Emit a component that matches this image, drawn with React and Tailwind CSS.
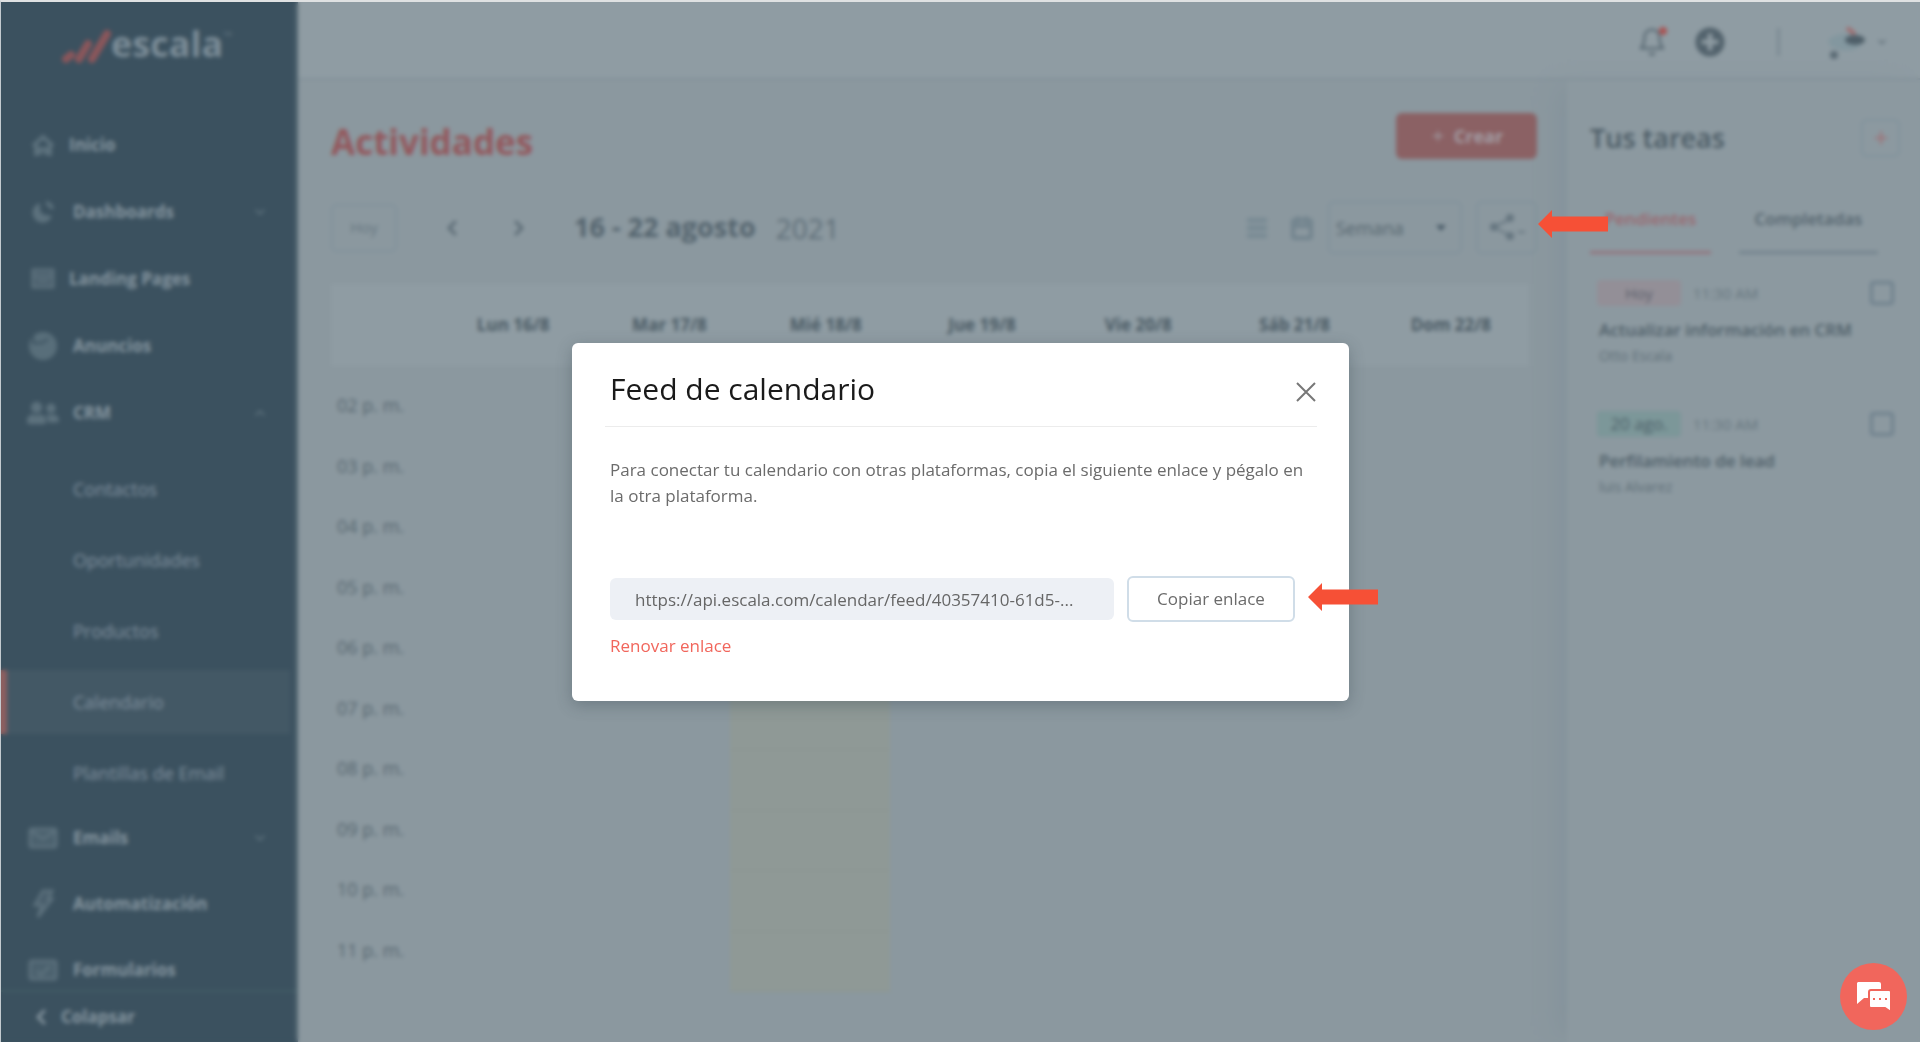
import React, { useState } from 'react';
import { FiBell, FiCalendar, FiChevronDown, FiChevronLeft, FiChevronRight, FiChevronUp, FiPlus, FiShare2 } from 'react-icons/fi';
import { FaPlusCircle, FaUserFriends } from 'react-icons/fa';

const HomeIcon = () => (
    <svg viewBox="0 0 24 24" className="w-6 h-6" fill="none" stroke="currentColor" strokeWidth="4">
        <path d="M2 13L12 4l10 9M5 11v12M19 11v12M9 22v-6h6v6" />
    </svg>
);

const PieIcon = () => (
    <svg viewBox="0 0 24 24" className="w-6 h-6" fill="currentColor">
        <path d="M9 3a10 10 0 1 0 12 13l-6-1a6 6 0 0 1-6-6z" />
        <path d="M15 1a9 9 0 0 1 8 8h-4a6 6 0 0 0-4-4z" />
    </svg>
);

const BoxIcon = ({ children }) => (
    <svg viewBox="0 0 30 22" className="w-[30px] h-[22px]" fill="none" stroke="currentColor" strokeWidth="3">
        <rect x="2" y="2" width="26" height="18" rx="2" fill="currentColor" fillOpacity="0.5" />
        {children}
    </svg>
);

const LandingIcon = () => (
    <svg viewBox="0 0 24 22" className="w-6 h-[22px]" fill="none" stroke="currentColor" strokeWidth="3">
        <path d="M2 2h20v17H2zM2 8h20M6 13h12" fill="currentColor" fillOpacity="0.4" />
    </svg>
);

const AdsIcon = () => (
    <svg viewBox="0 0 30 30" className="w-[30px] h-[30px]" fill="none" stroke="currentColor">
        <circle cx="15" cy="15" r="14" fill="currentColor" stroke="none" fillOpacity="0.9" />
        <path d="M5 3v9h9l6-4" stroke="#3b515f" strokeWidth="2" />
    </svg>
);

const BoltIcon = () => (
    <svg viewBox="0 0 24 30" className="w-6 h-[30px]" fill="none" stroke="currentColor" strokeWidth="3">
        <path d="M12 2h9l-4 8h4L7 28l4-12H4z" fill="currentColor" fillOpacity="0.4" />
    </svg>
);

const mainItems = [
    { label: 'Inicio', icon: <HomeIcon />, tight: true },
    { label: 'Dashboards', icon: <PieIcon />, arrow: 'down' },
    { label: 'Landing Pages', icon: <LandingIcon />, tight: true },
    { label: 'Anuncios', icon: <AdsIcon /> },
    { label: 'CRM', icon: <FaUserFriends className="w-8 h-7" />, arrow: 'up' },
];

const crmItems = ['Contactos', 'Oportunidades', 'Productos', 'Calendario', 'Plantillas de Email'];

const extraItems = [
    { label: 'Emails', icon: <BoxIcon><path d="M3 4l12 8 12-8" /></BoxIcon>, arrow: 'down' },
    { label: 'Automatización', icon: <BoltIcon /> },
    { label: 'Formularios', icon: <BoxIcon><path d="M9 12l4 4 9-9" /></BoxIcon> },
];

const days = ['Lun 16/8', 'Mar 17/8', 'Mié 18/8', 'Jue 19/8', 'Vie 20/8', 'Sáb 21/8', 'Dom 22/8'];
const hours = ['02', '03', '04', '05', '06', '07', '08', '09', '10', '11'];
const TODAY = 2;

const tasks = [
    { id: 1, due: 'Hoy', today: true, time: '11:30 AM', title: 'Actualizar información en CRM', owner: 'Otto Escala' },
    { id: 2, due: '20 ago.', today: false, time: '11:30 AM', title: 'Perfilamiento de lead', owner: 'luis Alvarez' },
];

function NavItem({ item }) {
    return (
        <a href="#" className={`flex items-center h-[66px] pl-[30px] pr-[30px] font-bold text-[#8696a0] ${item.tight ? 'gap-[14px]' : 'gap-[18px]'}`}>
            <span className="w-6 shrink-0 flex justify-center text-[#5c717d]">
                <span className="shrink-0">{item.icon}</span>
            </span>
            <span className="flex-1">{item.label}</span>
            {item.arrow === 'down' && <FiChevronDown className="w-4 h-4 text-[#657984]" />}
            {item.arrow === 'up' && <FiChevronUp className="w-4 h-4 text-[#657984]" />}
        </a>
    );
}

function Sidebar() {
    return (
        <aside className="w-[297px] shrink-0 flex flex-col bg-[#3b515f] text-[17px] overflow-hidden">
            <div className="h-[110px] shrink-0 pl-[60px] pt-[22px] flex items-start">
                <svg viewBox="0 0 50 36" className="w-[50px] h-9 mt-1" stroke="#8a565b" strokeWidth="8" strokeLinecap="round">
                    <path d="M5 31l5-4M18 31l9-15M31 31L46 6" />
                </svg>
                <span className="text-[36px] leading-10 font-bold text-[#7c8d98]">escala</span>
                <span className="text-xs text-[#60737f] pt-1">™</span>
            </div>
            <nav className="flex-1 min-h-0 overflow-hidden">
                <div className="flex flex-col gap-px">
                    {mainItems.map((item) => <NavItem key={item.label} item={item} />)}
                </div>
                <div className="flex flex-col gap-[7px] pt-[11px]">
                    {crmItems.map((label) => (
                        <a
                            key={label}
                            href="#"
                            className={`h-16 mr-2 flex items-center text-lg font-medium text-[#8292a0] border-l-6 ${label === 'Calendario' ? 'bg-[#435865] border-[#8c5f60]' : 'border-transparent'}`}
                        >
                            <span className="pl-[66px]">{label}</span>
                        </a>
                    ))}
                </div>
                {extraItems.map((item) => <NavItem key={item.label} item={item} />)}
            </nav>
            <button className="h-[52px] shrink-0 border-t-2 border-[#425c66] flex items-center gap-2 pl-[28px] font-bold text-[#8696a0]">
                <FiChevronLeft className="w-6 h-6" strokeWidth={3} /> Colapsar
            </button>
        </aside>
    );
}

function TopBar() {
    return (
        <header className="h-[78px] shrink-0 bg-[#8f9ca3] border-b-2 border-[#83919a] flex items-center justify-end pr-8 pt-1 text-[#5d6d77]">
            <button aria-label="Notificaciones" className="relative mr-7">
                <FiBell className="w-[30px] h-[30px]" />
                <span className="absolute top-0 right-0 w-2 h-2 rounded-full bg-[#a95353]" />
            </button>
            <button aria-label="Agregar"><FaPlusCircle className="w-[30px] h-[30px] text-[#53636d]" /></button>
            <span className="w-[3px] h-7 bg-[#7b8a93] ml-[52px] mr-11" />
            <button aria-label="Perfil" className="flex items-center gap-2">
                <svg viewBox="0 0 44 40" className="w-11 h-10">
                    <path d="M4 18c8-8 26-8 36-2-2 14-20 16-34 8z" fill="#83979f" />
                    <ellipse cx="31" cy="18" rx="10" ry="5" fill="#4f5f69" />
                    <path d="M23 6l8 6" stroke="#a0686a" strokeWidth="4" />
                    <circle cx="10" cy="33" r="4" fill="#5b6b75" />
                </svg>
                <FiChevronDown className="w-3 h-3" strokeWidth={3} />
            </button>
        </header>
    );
}

function Calendar() {
    const [view, setView] = useState('Semana');

    return (
        <main className="flex-1 min-w-0 flex flex-col pl-[33px] pr-[30px] pt-8 pb-[50px]">
            <div className="flex items-center justify-between">
                <h1 className="text-[35px] leading-9 pt-3 font-bold text-[#93585d]">Actividades</h1>
                <button className="w-[141px] h-[46px] rounded-md bg-[#8b6164] text-[#a39ea5] font-bold text-lg flex items-center justify-center gap-2">
                    <FiPlus className="w-4 h-4" strokeWidth={2} /> Crear
                </button>
            </div>

            {/* Toolbar */}
            <div className="flex items-center mt-[41px] h-[53px] text-[#5b6b75]">
                <button className="w-[66px] h-12 rounded-md border-2 border-[#81929c] text-[15px] text-[#66767f]">Hoy</button>
                <button aria-label="Semana anterior" className="ml-[43px]"><FiChevronLeft className="w-6 h-6" strokeWidth={3} /></button>
                <button aria-label="Semana siguiente" className="ml-[43px]"><FiChevronRight className="w-6 h-6" strokeWidth={3} /></button>
                <h2 className="ml-[43px] text-[27px] font-bold text-[#53636d]">16 - 22 agosto</h2>
                <span className="ml-5 text-[28px] text-[#5d6d77]">2021</span>

                <div className="ml-auto flex items-center">
                    <button aria-label="Vista de lista">
                        <svg viewBox="0 0 22 20" className="w-[22px] h-5" stroke="#778993" strokeWidth="5">
                            <path d="M1 2h20M1 10h20M1 18h20" />
                        </svg>
                    </button>
                    <button aria-label="Vista de calendario" className="ml-[22px] mr-[14px]">
                        <FiCalendar className="w-6 h-6 text-[#72848e]" strokeWidth={4} />
                    </button>
                    <span className="relative">
                        <select
                            aria-label="Vista"
                            value={view}
                            onChange={(e) => setView(e.target.value)}
                            className="appearance-none w-[134px] h-[53px] rounded-md border-2 border-[#81929c] pl-[6px] text-lg text-[#56666f]"
                        >
                            <option>Día</option>
                            <option>Semana</option>
                            <option>Mes</option>
                        </select>
                        <svg viewBox="0 0 10 6" className="absolute right-4 top-6 w-[10px] h-[6px] pointer-events-none" fill="#475966">
                            <path d="M0 0h10L5 6z" />
                        </svg>
                    </span>
                    <button aria-label="Compartir" className="ml-[14px] w-[61px] h-[53px] rounded-md border-2 border-[#81929c] flex items-center justify-center text-[#667680]">
                        {/* The lower node trails a short dash to the right */}
                        <svg viewBox="0 0 36 28" className="w-9 h-7" fill="currentColor" stroke="currentColor" strokeWidth="2">
                            <path d="M5 13L21 5M5 13l16 9M29 18h7" />
                            <circle cx="5" cy="13" r="3" />
                            <circle cx="21" cy="4" r="3" />
                            <circle cx="21" cy="22" r="3" />
                        </svg>
                    </button>
                </div>
            </div>

            <div className="mt-[30px] mr-2 h-[82px] shrink-0 bg-[#8f9ca3] flex items-center pl-[104px]">
                {days.map((day) => (
                    <div key={day} className="flex-1 text-center text-[17px] font-bold text-[#4a5a64]">{day}</div>
                ))}
            </div>

            {/* Hours */}
            <div className="flex-1 mt-[21px] mr-2 flex flex-col">
                {hours.map((hour) => (
                    <div key={hour} className="flex-1 flex">
                        <div className="w-20 shrink-0 pl-[6px] pt-1 text-lg text-[#56666f]">{hour} p. m.</div>
                        {days.map((day, i) => (
                            <div key={day} className={`flex-1 border-b ${i === TODAY ? 'bg-[#8f9996] border-[#8b9591]' : 'border-[#8a989e]'}`} />
                        ))}
                    </div>
                ))}
            </div>
        </main>
    );
}

function Tasks() {
    return (
        <aside className="w-[353px] shrink-0 bg-[#8c99a0] pl-[23px] pr-5 pt-[35px] shadow-[-16px_0_24px_-8px_#84929b]">
            <div className="flex items-center justify-between h-[46px]">
                <h2 className="text-[27px] font-semibold text-[#4a5a64]">Tus tareas</h2>
                <button aria-label="Nueva tarea" className="w-[39px] h-[38px] rounded-md border-2 border-[#81929c] flex items-center justify-center text-[#a16a6f]">
                    <FiPlus className="w-5 h-5" strokeWidth={2} />
                </button>
            </div>
            <div className="flex gap-7 mt-[42px] pr-[22px] text-[17px] text-center">
                <button className="w-[121px] h-[51px] pb-4 border-b-3 border-[#93757e] text-[#9b666d] font-semibold">Pendientes</button>
                <button className="flex-1 h-[51px] pb-4 border-b-3 border-[#74848e] text-[#53636d] font-semibold">Completadas</button>
            </div>
            <ul className="pt-[26px] pl-[7px]">
                {tasks.map((task) => (
                    <li key={task.id} className="h-[131px] pr-[6px]">
                        <div className="flex items-center">
                            <span className={`w-[84px] h-[26px] rounded text-center leading-[26px] ${task.today ? 'bg-[#938f97] text-[15px] text-[#5b5f6c]' : 'bg-[#7c9799] text-[17px] text-[#4c5f68]'}`}>
                                {task.due}
                            </span>
                            <span className="ml-3 flex-1 text-[15px] text-[#66767f]">{task.time}</span>
                            <input
                                type="checkbox"
                                aria-label={task.title}
                                className="appearance-none w-6 h-6 rounded border-3 border-[#6f818d]"
                            />
                        </div>
                        <h3 className="mt-3 pl-[2px] text-[17px] leading-6 font-semibold text-[#4e5e68]">{task.title}</h3>
                        <p className="mt-[2px] pl-[2px] text-sm leading-6 text-[#5f6f78]">{task.owner}</p>
                    </li>
                ))}
            </ul>
        </aside>
    );
}

const PointerArrow = () => (
    <svg viewBox="0 0 70 28" className="w-[70px] h-7" fill="#f65036">
        <path d="M0 14L14 0v6.500h56v15H14V28z" />
    </svg>
);

function FeedModal() {
    return (
        <div role="dialog" aria-labelledby="feed-title" className="w-[777px] rounded-md bg-white pl-[33px] pr-8 pt-5 pb-[43px] shadow-[0_4px_16px_rgba(40,55,65,0.3)]">
            <div className="flex items-center justify-between h-16 pl-[5px] pb-3 border-b border-[#ececec]">
                <h2 id="feed-title" className="text-[30px] leading-10 text-[#1a1a1a]">Feed de calendario</h2>
                <button aria-label="Cerrar" className="pr-px pt-[6px]">
                    <svg viewBox="0 0 20 20" className="w-5 h-5" stroke="#777" strokeWidth="2">
                        <path d="M1 1l18 18M19 1L1 19" />
                    </svg>
                </button>
            </div>
            <div className="pl-[5px] pt-[30px]">
                <p className="text-[17px] leading-[26px] text-[#6b6b6b]">
                    Para conectar tu calendario con otras plataformas, copia el siguiente enlace y pégalo en la otra plataforma.
                </p>
                <div className="relative flex items-center gap-[13px] mt-[67px] mr-[22px]">
                    <input
                        readOnly
                        aria-label="Enlace del feed"
                        value="https://api.escala.com/calendar/feed/40357410-61d5-..."
                        className="flex-1 min-w-0 h-[42px] rounded-md bg-[#edf0f5] px-[25px] text-[17px] text-[#666] outline-none"
                    />
                    <button className="w-[168px] h-[46px] rounded-md border-2 border-[#d0dde8] text-[17px] text-[#6b6b6b]">Copiar enlace</button>
                    <span className="absolute left-full top-[7px] ml-[13px]"><PointerArrow /></span>
                </div>
                <a href="#" className="block mt-3 text-[17px] leading-6 text-[#f1665c]">Renovar enlace</a>
            </div>
        </div>
    );
}

export default function App() {
    return (
        <div className="relative h-screen overflow-hidden border-t-2 border-l border-t-[#dfe1e2] border-l-[#c3cacf] bg-[#8b989f] font-['Open_Sans',sans-serif]">
            <div className="flex h-full">
                <Sidebar />
                <div className="flex-1 min-w-0 flex flex-col shadow-[0_0_6px_#6f7f89]">
                    <TopBar />
                    <div className="flex-1 min-h-0 flex">
                        <Calendar />
                        <Tasks />
                    </div>
                </div>
            </div>

            {/* Overlay */}
            <div className="absolute inset-0 backdrop-blur-[2px] flex items-center justify-center">
                <FeedModal />
            </div>

            <span className="absolute top-[208px] right-[312px]"><PointerArrow /></span>

            <button aria-label="Chat" className="absolute right-[13px] bottom-3 w-[67px] h-[67px] rounded-full bg-[#f1665c] flex items-center justify-center">
                <svg viewBox="0 0 36 32" className="w-9 h-8">
                    <path d="M2 1h21a2 2 0 0 1 2 2v14H8l-7 6V2z" fill="#fff" />
                    <path d="M15 9h18a2 2 0 0 1 2 2v20l-6-4H15a2 2 0 0 1-2-2V11a2 2 0 0 1 2-2z" fill="#fff" stroke="#f1665c" strokeWidth="2" />
                    <path d="M17 18h2M23 18h2M29 18h2" stroke="#f1665c" strokeWidth="2" />
                </svg>
            </button>
        </div>
    );
}
